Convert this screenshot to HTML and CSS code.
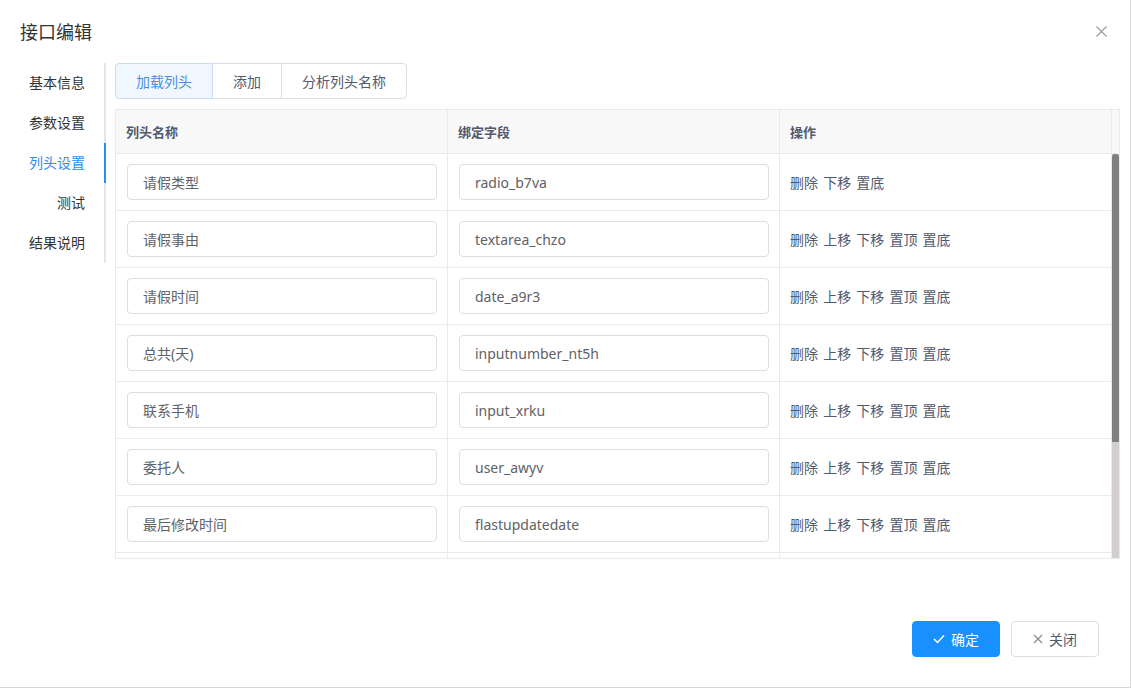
FILE: index.html
```html
<!DOCTYPE html>
<html lang="zh-CN">
<head>
<meta charset="utf-8">
<title>接口编辑</title>
<link rel="stylesheet" href="styles.css">
</head>
<body>
<div class="dialog">
  <div class="dlg-header">
    <span class="dlg-title">接口编辑</span>
    <svg class="dlg-close" width="11" height="11" viewBox="0 0 11 11"><path d="M0.5 0.5 L10.5 10.5 M10.5 0.5 L0.5 10.5" stroke="#999" stroke-width="1.1" fill="none"/></svg>
  </div>
  <div class="dlg-body">
    <ul class="side-nav">
      <li class="nav-item">基本信息</li>
      <li class="nav-item">参数设置</li>
      <li class="nav-item active">列头设置</li>
      <li class="nav-item">测试</li>
      <li class="nav-item">结果说明</li>
    </ul>
    <div class="main">
      <div class="btn-group">
        <button class="gbtn gbtn-active">加载列头</button>
        <button class="gbtn">添加</button>
        <button class="gbtn">分析列头名称</button>
      </div>
      <div class="table">
        <div class="thead">
          <div class="th">列头名称</div>
          <div class="th">绑定字段</div>
          <div class="th">操作</div>
          <div class="th th-gutter"></div>
        </div>
        <div class="tbody">
          <div class="rows">
            <div class="tr">
              <div class="td"><div class="input">请假类型</div></div>
              <div class="td"><div class="input">radio_b7va</div></div>
              <div class="td td-ops">删除 下移 置底</div>
            </div>
            <div class="tr">
              <div class="td"><div class="input">请假事由</div></div>
              <div class="td"><div class="input">textarea_chzo</div></div>
              <div class="td td-ops">删除 上移 下移 置顶 置底</div>
            </div>
            <div class="tr">
              <div class="td"><div class="input">请假时间</div></div>
              <div class="td"><div class="input">date_a9r3</div></div>
              <div class="td td-ops">删除 上移 下移 置顶 置底</div>
            </div>
            <div class="tr">
              <div class="td"><div class="input">总共(天)</div></div>
              <div class="td"><div class="input">inputnumber_nt5h</div></div>
              <div class="td td-ops">删除 上移 下移 置顶 置底</div>
            </div>
            <div class="tr">
              <div class="td"><div class="input">联系手机</div></div>
              <div class="td"><div class="input">input_xrku</div></div>
              <div class="td td-ops">删除 上移 下移 置顶 置底</div>
            </div>
            <div class="tr">
              <div class="td"><div class="input">委托人</div></div>
              <div class="td"><div class="input">user_awyv</div></div>
              <div class="td td-ops">删除 上移 下移 置顶 置底</div>
            </div>
            <div class="tr">
              <div class="td"><div class="input">最后修改时间</div></div>
              <div class="td"><div class="input">flastupdatedate</div></div>
              <div class="td td-ops">删除 上移 下移 置顶 置底</div>
            </div>
            <div class="tr">
              <div class="td"></div>
              <div class="td"></div>
              <div class="td"></div>
            </div>
          </div>
          <div class="scrollbar"><div class="thumb"></div></div>
        </div>
      </div>
    </div>
  </div>
  <div class="dlg-footer">
    <button class="fbtn fbtn-primary">
      <svg width="12" height="10" viewBox="0 0 12 10"><path d="M1 5 L4.5 8.5 L11 1.5" stroke="#fff" stroke-width="1.5" fill="none"/></svg>
      <span>确定</span>
    </button>
    <button class="fbtn">
      <svg width="10" height="10" viewBox="0 0 10 10"><path d="M1 1 L9 9 M9 1 L1 9" stroke="#808695" stroke-width="1.1" fill="none"/></svg>
      <span>关闭</span>
    </button>
  </div>
</div>
</body>
</html>
```

FILE: styles.css
```css
* { box-sizing: border-box; }
html, body { margin: 0; padding: 0; background: #fff; }
body {
  font-family: "Noto Sans", "Noto Sans CJK SC", sans-serif;
  font-size: 14px;
  color: #515a6e;
}
.dialog {
  width: 1131px;
  height: 688px;
  border-right: 1px solid #d7d7d7;
  border-bottom: 1px solid #d7d7d7;
  display: flex;
  flex-direction: column;
  background: #fff;
}
.dlg-header {
  height: 63px;
  flex: none;
  display: flex;
  align-items: center;
  justify-content: space-between;
  padding: 0 23px 0 20px;
}
.dlg-title {
  font-family: "Noto Sans CJK SC", sans-serif;
  font-size: 18px;
  color: #333;
  line-height: 24px;
  margin-top: -2px;
}
.dlg-close { display: block; }
.dlg-body {
  display: flex;
  flex: none;
}
.side-nav {
  list-style: none;
  margin: 0;
  padding: 0;
  width: 106px;
  flex: none;
}
.nav-item {
  height: 40px;
  line-height: 39px;
  text-align: right;
  padding-right: 19px;
  border-right: 2px solid #e3e6ee;
  font-family: "Noto Sans CJK SC", sans-serif;
  font-size: 14px;
  color: #333;
}
.nav-item.active {
  color: #2d8cf0;
  border-right-color: #2d8cf0;
}
.main {
  margin-left: 9px;
  width: 1005px;
}
.btn-group {
  display: flex;
  height: 36px;
}
.gbtn {
  height: 36px;
  padding: 0 20px;
  border: 1px solid #dcdee2;
  background: #fff;
  font-family: "Noto Sans CJK SC", sans-serif;
  font-size: 14px;
  color: #515a6e;
  margin-left: -1px;
  white-space: nowrap;
  cursor: pointer;
}
.gbtn:first-child { margin-left: 0; border-radius: 4px 0 0 4px; }
.gbtn:last-child { border-radius: 0 4px 4px 0; }
.gbtn-active {
  background: #f0f7ff;
  border-color: #c9dcf2;
  color: #4b8ee0;
  position: relative;
  z-index: 1;
}
.table {
  margin-top: 10px;
  border: 1px solid #e8eaec;
  width: 1005px;
}
.thead {
  display: grid;
  grid-template-columns: 332px 332px 332px 7px;
  height: 44px;
  background: #f8f8f9;
  border-bottom: 1px solid #e8eaec;
}
.th {
  border-right: 1px solid #e8eaec;
  padding-left: 10px;
  display: flex;
  align-items: center;
  font-family: "Noto Sans CJK SC", sans-serif;
  font-size: 13px;
  font-weight: bold;
  color: #515a6e;
}
.th-gutter { border-right: none; padding: 0; }
.tbody {
  display: flex;
  height: 404px;
  overflow: hidden;
}
.rows {
  width: 996px;
  flex: none;
}
.tr {
  display: grid;
  grid-template-columns: 332px 332px 332px;
  height: 57px;
}
.td {
  border-right: 1px solid #e8eaec;
  border-bottom: 1px solid #e8eaec;
  padding: 10px 10px 10px 11px;
  display: flex;
  align-items: center;
}
.input {
  width: 100%;
  height: 36px;
  border: 1px solid #dcdee2;
  border-radius: 4px;
  padding-left: 15px;
  display: flex;
  align-items: center;
  font-size: 14px;
  color: #606266;
  background: #fff;
}
.td-ops {
  padding-left: 10px;
  font-family: "Noto Sans CJK SC", sans-serif;
  font-size: 14px;
  color: #515a6e;
  word-spacing: 2px;
  white-space: pre;
}
.scrollbar {
  width: 7px;
  flex: none;
  background: #d3cfcf;
}
.thumb {
  height: 288px;
  background: #7f7f7f;
  border-radius: 3px 3px 0 0;
}
.dlg-footer {
  margin-top: auto;
  display: flex;
  justify-content: flex-end;
  gap: 11px;
  padding: 0 31px 30px 0;
}
.fbtn {
  width: 88px;
  height: 36px;
  border: 1px solid #dcdee2;
  border-radius: 4px;
  background: #fff;
  display: flex;
  align-items: center;
  justify-content: center;
  gap: 6px;
  font-family: "Noto Sans CJK SC", sans-serif;
  font-size: 14px;
  color: #515a6e;
  padding: 0;
}
.fbtn-primary {
  background: #1890ff;
  border-color: #1890ff;
  color: #fff;
}
```
